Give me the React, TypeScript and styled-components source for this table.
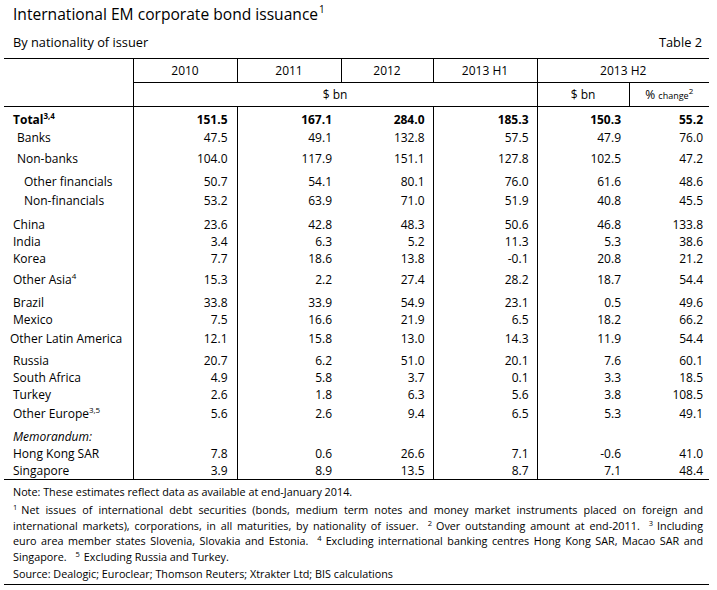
import React from 'react';
import styled, { createGlobalStyle } from 'styled-components';

const GlobalStyle = createGlobalStyle`
    html, body {
        margin: 0;
        padding: 0;
        background: #ffffff;
    }
    body {
        font-family: 'Open Sans', 'Noto Sans', sans-serif;
        color: #000000;
    }
`;

const Page = styled.div`
    width: 705px;
    padding: 0 8px 0 4px;
`;

const Heading = styled.div`
    padding: 0 7px 0 9px;
`;

const Title = styled.h1`
    margin: 0;
    padding-top: 3px;
    font-size: 15.6px;
    font-weight: 400;
    line-height: 22px;
`;

const TitleSup = styled.sup`
    font-size: 10px;
    line-height: 0;
    vertical-align: 7px;
    margin-left: 1px;
`;

const SubRow = styled.div`
    display: flex;
    justify-content: space-between;
    align-items: baseline;
    margin-top: 9px;
    font-size: 12.8px;
    line-height: 17px;
`;

const Table = styled.table`
    width: 705px;
    margin-top: 7px;
    border-collapse: collapse;
    table-layout: fixed;
    font-size: 12px;
    border-top: 1px solid #000;
    border-bottom: 1px solid #000;
`;

const HeadCell = styled.th<{ $right?: boolean; $bottom?: boolean }>`
    height: 23px;
    padding: 0;
    font-weight: 400;
    text-align: center;
    vertical-align: middle;
    line-height: 17px;
    border-right: ${(p) => (p.$right ? '1px solid #000' : 'none')};
    border-bottom: ${(p) => (p.$bottom ? '1px solid #000' : 'none')};
`;

const Small = styled.span`
    font-size: 9px;
`;

const Sup = styled.sup`
    font-size: 8px;
    line-height: 0;
    vertical-align: 5px;
`;

const LabelCell = styled.td<{ $gap: number; $indent: number; $bold?: boolean; $italic?: boolean }>`
    padding: ${(p) => p.$gap}px 0 0 ${(p) => p.$indent}px;
    height: 17px;
    line-height: 17px;
    white-space: nowrap;
    font-weight: ${(p) => (p.$bold ? 700 : 400)};
    font-style: ${(p) => (p.$italic ? 'italic' : 'normal')};
    border-right: 1px solid #000;
`;

const NumCell = styled.td<{ $gap: number; $bold?: boolean; $line?: boolean; $pad?: number }>`
    padding: ${(p) => p.$gap}px ${(p) => p.$pad ?? 8}px 0 0;
    height: 17px;
    line-height: 17px;
    text-align: right;
    font-weight: ${(p) => (p.$bold ? 700 : 400)};
    border-right: ${(p) => (p.$line ? '1px solid #000' : 'none')};
`;

const Notes = styled.div`
    padding: 4px 6px 2px 9px;
    font-size: 10.8px;
    border-bottom: 1px solid #000;
`;

const NoteLine = styled.div`
    line-height: 16px;
`;

const Footnotes = styled.div`
    margin: 2px 0;
    line-height: 15.5px;
`;

const JustLine = styled.div<{ $last?: boolean }>`
    white-space: nowrap;
    text-align: ${(p) => (p.$last ? 'left' : 'justify')};
    text-align-last: ${(p) => (p.$last ? 'left' : 'justify')};
`;

const NoteSup = styled.sup`
    font-size: 7.5px;
    line-height: 0;
    vertical-align: 4px;
    margin-right: 4px;
`;

const Gap = styled.span`
    display: inline-block;
    width: 9px;
`;

type Row = {
    label: string;
    sup?: string;
    gap: number;
    indent: number;
    bold?: boolean;
    italic?: boolean;
    v: string[];
};

const rows: Row[] = [
    { label: 'Total', sup: '3,4', bold: true, gap: 4, indent: 9, v: ['151.5', '167.1', '284.0', '185.3', '150.3', '55.2'] },
    { label: 'Banks', gap: 1, indent: 13, v: ['47.5', '49.1', '132.8', '57.5', '47.9', '76.0'] },
    { label: 'Non-banks', gap: 3.5, indent: 13, v: ['104.0', '117.9', '151.1', '127.8', '102.5', '47.2'] },
    { label: 'Other financials', gap: 6.5, indent: 20, v: ['50.7', '54.1', '80.1', '76.0', '61.6', '48.6'] },
    { label: 'Non-financials', gap: 2, indent: 20, v: ['53.2', '63.9', '71.0', '51.9', '40.8', '45.5'] },
    { label: 'China', gap: 7, indent: 9, v: ['23.6', '42.8', '48.3', '50.6', '46.8', '133.8'] },
    { label: 'India', gap: 0, indent: 9, v: ['3.4', '6.3', '5.2', '11.3', '5.3', '38.6'] },
    { label: 'Korea', gap: 0, indent: 9, v: ['7.7', '18.6', '13.8', '-0.1', '20.8', '21.2'] },
    { label: 'Other Asia', sup: '4', gap: 4, indent: 9, v: ['15.3', '2.2', '27.4', '28.2', '18.7', '54.4'] },
    { label: 'Brazil', gap: 6, indent: 9, v: ['33.8', '33.9', '54.9', '23.1', '0.5', '49.6'] },
    { label: 'Mexico', gap: 0, indent: 9, v: ['7.5', '16.6', '21.9', '6.5', '18.2', '66.2'] },
    { label: 'Other Latin America', gap: 2, indent: 6, v: ['12.1', '15.8', '13.0', '14.3', '11.9', '54.4'] },
    { label: 'Russia', gap: 5, indent: 9, v: ['20.7', '6.2', '51.0', '20.1', '7.6', '60.1'] },
    { label: 'South Africa', gap: 0, indent: 9, v: ['4.9', '5.8', '3.7', '0.1', '3.3', '18.5'] },
    { label: 'Turkey', gap: 0, indent: 9, v: ['2.6', '1.8', '6.3', '5.6', '3.8', '108.5'] },
    { label: 'Other Europe', sup: '3,5', gap: 2, indent: 9, v: ['5.6', '2.6', '9.4', '6.5', '5.3', '49.1'] },
    { label: 'Memorandum:', italic: true, gap: 6, indent: 9, v: ['', '', '', '', '', ''] },
    { label: 'Hong Kong SAR', gap: 0, indent: 9, v: ['7.8', '0.6', '26.6', '7.1', '-0.6', '41.0'] },
    { label: 'Singapore', gap: 0, indent: 9, v: ['3.9', '8.9', '13.5', '8.7', '7.1', '48.4'] },
];

// columns with a rule on their right side in the body
const bodyLines = [true, false, true, true, false, false];
const pads = [9, 9, 8, 8, 8, 6];

const App = () => {
    return (
        <Page>
            <GlobalStyle />
            <Heading>
                <Title>
                    International EM corporate bond issuance<TitleSup>1</TitleSup>
                </Title>
                <SubRow>
                    <span>By nationality of issuer</span>
                    <span>Table 2</span>
                </SubRow>
            </Heading>
            <Table>
                <colgroup>
                    <col style={{ width: 129 }} />
                    <col style={{ width: 104 }} />
                    <col style={{ width: 104 }} />
                    <col style={{ width: 92 }} />
                    <col style={{ width: 104 }} />
                    <col style={{ width: 92 }} />
                    <col style={{ width: 80 }} />
                </colgroup>
                <thead>
                    <tr>
                        <HeadCell rowSpan={2} $right $bottom />
                        <HeadCell $right $bottom>2010</HeadCell>
                        <HeadCell $right $bottom>2011</HeadCell>
                        <HeadCell $right $bottom>2012</HeadCell>
                        <HeadCell $right $bottom>2013 H1</HeadCell>
                        <HeadCell colSpan={2} $bottom>2013 H2</HeadCell>
                    </tr>
                    <tr>
                        <HeadCell colSpan={4} $right $bottom>$ bn</HeadCell>
                        <HeadCell $right $bottom>$ bn</HeadCell>
                        <HeadCell $bottom>
                            % <Small>change</Small>
                            <Sup>2</Sup>
                        </HeadCell>
                    </tr>
                </thead>
                <tbody>
                    {rows.map((r) => (
                        <tr key={r.label}>
                            <LabelCell $gap={r.gap} $indent={r.indent} $bold={r.bold} $italic={r.italic}>
                                {r.label}
                                {r.sup && <Sup>{r.sup}</Sup>}
                            </LabelCell>
                            {r.v.map((val, i) => (
                                <NumCell key={i} $gap={r.gap} $bold={r.bold} $line={bodyLines[i]} $pad={pads[i]}>
                                    {val}
                                </NumCell>
                            ))}
                        </tr>
                    ))}
                </tbody>
            </Table>
            <Notes>
                <NoteLine>Note: These estimates reflect data as available at end-January 2014.</NoteLine>
                <Footnotes>
                    <JustLine>
                        <NoteSup>1</NoteSup>Net issues of international debt securities (bonds, medium term notes and money market instruments placed on foreign and
                    </JustLine>
                    <JustLine>
                        international markets), corporations, in all maturities, by nationality of issuer.<Gap />
                        <NoteSup>2</NoteSup>Over outstanding amount at end-2011.<Gap />
                        <NoteSup>3</NoteSup>Including
                    </JustLine>
                    <JustLine>
                        euro area member states Slovenia, Slovakia and Estonia.<Gap />
                        <NoteSup>4</NoteSup>Excluding international banking centres Hong Kong SAR, Macao SAR and
                    </JustLine>
                    <JustLine $last>
                        Singapore.<Gap />
                        <NoteSup>5</NoteSup>Excluding Russia and Turkey.
                    </JustLine>
                </Footnotes>
                <NoteLine>Source: Dealogic; Euroclear; Thomson Reuters; Xtrakter Ltd; BIS calculations</NoteLine>
            </Notes>
        </Page>
    );
};

export default App;
